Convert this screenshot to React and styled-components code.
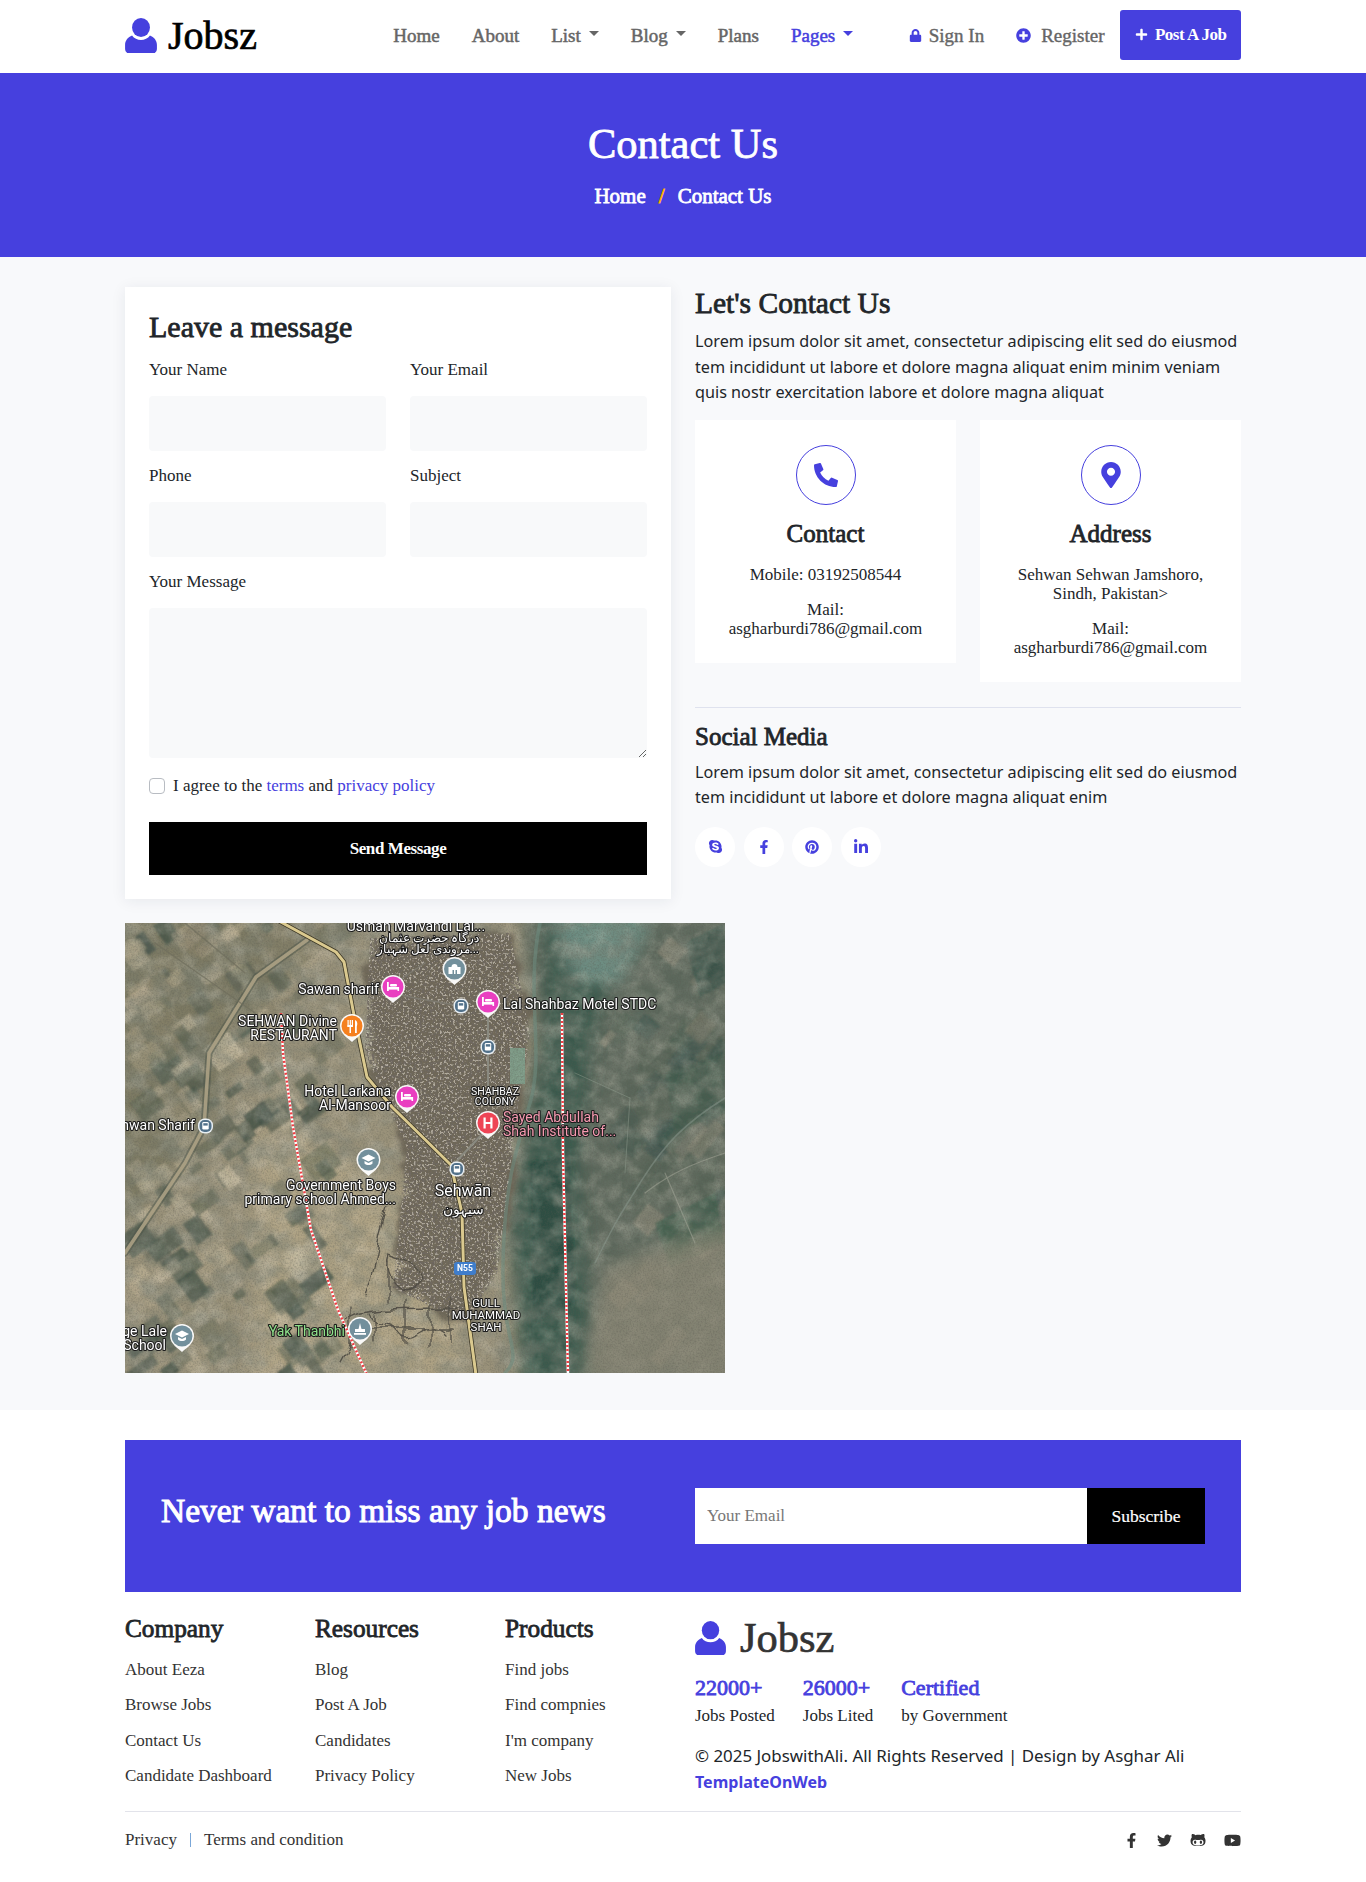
import React from "react";
import styled, { css, createGlobalStyle } from "styled-components";
import {
  FaFacebookF,
  FaGithubAlt,
  FaLinkedinIn,
  FaLock,
  FaMapMarkerAlt,
  FaPhoneAlt,
  FaPinterest,
  FaPlus,
  FaPlusCircle,
  FaSkype,
  FaTwitter,
  FaYoutube,
} from "react-icons/fa";

const navLinks = [
  { label: "Home" },
  { label: "About" },
  { label: "List", caret: true },
  { label: "Blog", caret: true },
  { label: "Plans" },
  { label: "Pages", caret: true, active: true },
];

const footerColumns = [
  { title: "Company", links: ["About Eeza", "Browse Jobs", "Contact Us", "Candidate Dashboard"] },
  { title: "Resources", links: ["Blog", "Post A Job", "Candidates", "Privacy Policy"] },
  { title: "Products", links: ["Find jobs", "Find compnies", "I'm company", "New Jobs"] },
];

const stats = [
  { value: "22000+", label: "Jobs Posted" },
  { value: "26000+", label: "Jobs Lited" },
  { value: "Certified", label: "by Government" },
];

// cheap seeded random so the map fields stay the same between runs
function seeded(seed) {
  let s = seed;
  return () => {
    s = (s * 16807) % 2147483647;
    return (s - 1) / 2147483646;
  };
}

function buildFields() {
  const rnd = seeded(4211);
  const list = [];
  const tones = ["#3a4a40", "#46564a", "#a89e84", "#b9ad92", "#8a846c", "#c6ba9e", "#3f4f44", "#b0a68c", "#58604e"];
  for (let i = 0; i < 170; i++) {
    const x = rnd() * 200 - 10;
    const y = rnd() * 460;
    list.push({
      x,
      y,
      w: 10 + rnd() * 26,
      h: 8 + rnd() * 22,
      fill: tones[Math.floor(rnd() * tones.length)],
      o: 0.35 + rnd() * 0.5,
      a: -36,
    });
  }
  // a few strips on the far bank
  const far = ["#41584a", "#7f7c6a", "#54685a", "#9a9380", "#35504a"];
  for (let i = 0; i < 50; i++) {
    const x = 470 + rnd() * 140;
    const y = rnd() * 460;
    list.push({
      x,
      y,
      w: 14 + rnd() * 30,
      h: 6 + rnd() * 16,
      fill: far[Math.floor(rnd() * far.length)],
      o: 0.25 + rnd() * 0.35,
      a: -50,
    });
  }
  return list;
}

const fields = buildFields();

function UserMark({ size }) {
  return (
    <svg width={size} height={size * 1.12} viewBox="0 0 32 36" aria-hidden="true">
      <ellipse cx="16" cy="9.5" rx="9" ry="9.5" fill="#4640de" />
      <path
        d="M7 17.5c2 3 5.5 4.5 9 4.5s7-1.5 9-4.5c4 1.5 7 5 7 9.5v4c0 2.8-2 5-5 5H5c-3 0-5-2.2-5-5v-4c0-4.500 3-8 7-9.500z"
        fill="#4640de"
      />
    </svg>
  );
}

function Pin({ x, y, color, children }) {
  return (
    <g transform={`translate(${x} ${y})`}>
      <path d="M0 15C-3 12-12 7-12 -1a12 12 0 0 1 24 0C12 7 3 12 0 15z" fill="#fff" opacity="0.95" />
      <circle r="10.500" cy="-1" fill={color} />
      <g fill="#fff" stroke="none">
        {children}
      </g>
    </g>
  );
}

function BusStop({ x, y }) {
  return (
    <g transform={`translate(${x} ${y})`}>
      <rect x="-7.500" y="-7.500" width="15" height="15" rx="6.500" fill="#e8eef2" />
      <rect x="-6" y="-6" width="12" height="12" rx="5" fill="#52718a" />
      <rect x="-3.200" y="-4" width="6.400" height="7.500" rx="1.200" fill="#fff" />
      <rect x="-2.200" y="-2.800" width="4.400" height="2.400" fill="#52718a" />
    </g>
  );
}

function MapLabel({ x, y, anchor, fill, size, children }) {
  return (
    <text
      x={x}
      y={y}
      textAnchor={anchor || "start"}
      dominantBaseline="middle"
      fontFamily="Roboto, sans-serif"
      fontSize={size || 14}
      fill={fill || "#fff"}
      stroke="#1c1c1c"
      strokeWidth="2.200"
      strokeLinejoin="round"
      paintOrder="stroke"
    >
      {children}
    </text>
  );
}

const BedGlyph = () => (
  <>
    <rect x="-6" y="-6" width="1.800" height="9" />
    <rect x="-6" y="-1" width="12" height="2.600" />
    <rect x="4.500" y="-1" width="1.600" height="4" />
    <rect x="-3" y="-4" width="7" height="2.500" rx="1" />
  </>
);

const CapGlyph = () => (
  <>
    <path d="M-7 -3L0 -6.500L7 -3L0 0.500z" />
    <path d="M-4 0v2.500c2 2 6 2 8 0V0L0 2z" />
  </>
);

const townShape = "M245 15L385 10 405 110 392 190 385 250 372 350 340 400 268 365 282 225 240 130z";

function SatelliteMap() {
  return (
    <svg width="600" height="450" viewBox="0 0 600 450" role="img" aria-label="Map of Sehwan">
      <defs>
        <filter id="soft" x="-20%" y="-20%" width="140%" height="140%">
          <feGaussianBlur stdDeviation="8" />
        </filter>
        <filter id="crisp" x="-5%" y="-5%" width="110%" height="110%">
          <feGaussianBlur stdDeviation="0.800" />
        </filter>
        <filter id="mottle">
          <feTurbulence type="fractalNoise" baseFrequency="0.035 0.05" numOctaves="5" seed="21" />
          <feColorMatrix values="0 0 0 0 0.2  0 0 0 0 0.22  0 0 0 0 0.18  2.600 0 0 0 -0.950" />
        </filter>
        <filter id="mottleLight">
          <feTurbulence type="fractalNoise" baseFrequency="0.06" numOctaves="4" seed="5" />
          <feColorMatrix values="0 0 0 0 0.85  0 0 0 0 0.8  0 0 0 0 0.68  2.400 0 0 0 -1" />
        </filter>
        <filter id="grainFine">
          <feTurbulence type="fractalNoise" baseFrequency="0.6" numOctaves="2" seed="3" />
          <feColorMatrix values="0 0 0 0 0.1  0 0 0 0 0.1  0 0 0 0 0.08  2.400 0 0 0 -1" />
        </filter>
        <filter id="townEdge" x="-15%" y="-15%" width="130%" height="130%">
          <feTurbulence type="fractalNoise" baseFrequency="0.03" numOctaves="3" seed="9" result="n" />
          <feDisplacementMap in="SourceGraphic" in2="n" scale="34" xChannelSelector="R" yChannelSelector="G" />
          <feGaussianBlur stdDeviation="2" />
        </filter>
        <filter id="wobble" x="-10%" y="-10%" width="120%" height="120%">
          <feTurbulence type="fractalNoise" baseFrequency="0.05" numOctaves="2" seed="14" result="n" />
          <feDisplacementMap in="SourceGraphic" in2="n" scale="12" xChannelSelector="R" yChannelSelector="G" />
        </filter>
        <filter id="townDark" x="-5%" y="-5%" width="110%" height="110%">
          <feTurbulence type="fractalNoise" baseFrequency="0.38" numOctaves="3" seed="12" />
          <feColorMatrix values="0 0 0 0 0.16  0 0 0 0 0.14  0 0 0 0 0.12  8 0 0 0 -3.800" />
          <feComposite in2="SourceGraphic" operator="in" />
        </filter>
        <filter id="townLight" x="-5%" y="-5%" width="110%" height="110%">
          <feTurbulence type="fractalNoise" baseFrequency="0.46" numOctaves="2" seed="31" />
          <feColorMatrix values="0 0 0 0 0.74  0 0 0 0 0.69  0 0 0 0 0.6  8 0 0 0 -4.400" />
          <feComposite in2="SourceGraphic" operator="in" />
        </filter>
      </defs>
      <rect width="600" height="450" fill="#9a927a" />
      <g filter="url(#soft)">
        <path d="M0 300L90 190 110 120 190 20 150 -10H-10V300z" fill="#7d7a63" />
        <path d="M130 200L250 250 330 300 340 460H130z" fill="#aea284" />
        <path d="M395 -10H610V460H400L380 300 410 120z" fill="#5c685b" />
        <path d="M415 -10H500L470 120 455 240 470 460H395L385 300 420 100z" fill="#3b5a4e" />
        <path d="M425 -10H530L495 60 450 55z" fill="#6d8d82" />
        <path d="M510 120L610 60V270L500 300z" fill="#586558" />
      </g>
      <g filter="url(#crisp)">
        {fields.map((f, i) => (
          <rect
            key={i}
            x={f.x}
            y={f.y}
            width={f.w}
            height={f.h}
            fill={f.fill}
            opacity={f.o}
            transform={`rotate(${f.a} ${f.x} ${f.y})`}
          />
        ))}
        <path d="M540 150L600 130V190L550 210z" fill="#3e5a4c" opacity="0.7" />
        <path d="M530 300L590 270 600 320 545 345z" fill="#42604f" opacity="0.8" />
        <path d="M560 20L600 0V60L575 75z" fill="#2f4d42" opacity="0.7" />
        <path d="M405 240L445 230 450 380 408 400z" fill="#27493f" opacity="0.7" />
      </g>
      <rect width="600" height="450" filter="url(#mottle)" opacity="0.5" />
      <rect width="600" height="450" filter="url(#mottleLight)" opacity="0.22" />
      <path d="M480 345L610 300V460H455z" fill="#8f8a78" opacity="0.75" filter="url(#soft)" />
      <g filter="url(#townEdge)">
        <path d={townShape} fill="#6c6557" opacity="0.92" />
      </g>
      <path d={townShape} fill="#000" filter="url(#townDark)" opacity="0.85" />
      <path d={townShape} fill="#000" filter="url(#townLight)" opacity="0.6" />
      <rect x="385" y="125" width="15" height="36" fill="#7fa08c" opacity="0.9" />
      <rect width="600" height="450" filter="url(#grainFine)" opacity="0.3" />
      <g fill="none" strokeLinecap="round" strokeLinejoin="round">
        <path d="M0 330L60 240 79 204 84 130 131 54 182 17" stroke="#4b5348" strokeWidth="7" opacity="0.5" />
        <path d="M0 330L60 240 79 204 84 130 131 54 182 17" stroke="#b0a587" strokeWidth="3.500" opacity="0.85" />
        <path d="M30 20L130 90M60 0L120 50" stroke="#6f6d5c" strokeWidth="1.500" opacity="0.7" />
        <path d="M415 0C400 70 420 130 405 180S380 260 378 340 400 430 380 450" stroke="#6d8c80" strokeWidth="3.500" opacity="0.55" />
        <path d="M600 175C560 200 540 220 515 260S490 300 470 340" stroke="#8b9a8f" strokeWidth="1.500" opacity="0.5" />
        <path d="M600 230C570 240 545 250 520 270M540 250L570 320" stroke="#a7a99b" strokeWidth="1.200" opacity="0.5" />
        <path d="M450 150L505 175M505 175L500 250" stroke="#8d9a8c" strokeWidth="1" opacity="0.5" />
        <g stroke="#4d4a42" strokeWidth="1.300" opacity="0.9" filter="url(#wobble)">
          <path d="M262 285L255 310 248 345 240 375" />
          <path d="M263 330C285 335 295 345 295 355 290 372 275 372 266 355 262 345 260 338 263 330z" />
          <path d="M263 330V380" />
          <path d="M220 395C240 385 265 385 335 385" />
          <path d="M225 425V385M250 420V390M280 420V375M305 425V380M325 420V375" />
          <path d="M225 405H330M245 390C255 410 265 395 275 410S300 390 320 410" />
          <path d="M215 440L240 395" />
        </g>
        <path d="M363 90V170M363 205L325 245" stroke="#8a8a80" strokeWidth="2" />
        <path d="M225 60L290 75 330 82M300 40L270 60" stroke="#7d7a70" strokeWidth="1.500" />
        <path
          d="M154 -2L211 29 219 39 228 87 242 154 267 184 326 242 337 290 339 364 351 452"
          stroke="#3a3524"
          strokeWidth="4.500"
        />
        <path
          d="M154 -2L211 29 219 39 228 87 242 154 267 184 326 242 337 290 339 364 351 452"
          stroke="#dac98f"
          strokeWidth="3"
        />
        <path d="M156 90L158 130 168 204 186 307 213 387 242 452" stroke="#fff" strokeWidth="2.500" strokeLinecap="butt" />
        <path
          d="M156 90L158 130 168 204 186 307 213 387 242 452"
          stroke="#ef3f45"
          strokeWidth="2.500"
          strokeDasharray="2 2"
          strokeLinecap="butt"
        />
        <path d="M437 90L438 230 443 452" stroke="#fff" strokeWidth="2.500" strokeLinecap="butt" />
        <path
          d="M437 90L438 230 443 452"
          stroke="#ef3f45"
          strokeWidth="2.500"
          strokeDasharray="2 2"
          strokeLinecap="butt"
        />
      </g>

      <MapLabel x={291} y={4} anchor="middle">Usman Marvandi Lal...</MapLabel>
      <MapLabel x={354} y={16} anchor="end" size={12}>درگاہ حضرت عثمان</MapLabel>
      <MapLabel x={354} y={27} anchor="end" size={12}>مروندی لعل شہباز...</MapLabel>

      <Pin x={329.500} y={47} color="#73909c">
        <rect x="-6" y="-3" width="12" height="7" />
        <circle cy="-3" r="3" />
        <rect x="-2" y="0" width="1.500" height="4" fill="#73909c" />
        <rect x="1" y="0" width="1.500" height="4" fill="#73909c" />
      </Pin>
      <BusStop x={336} y={83} />
      <BusStop x={363} y={124} />
      <BusStop x={332} y={246} />
      <BusStop x={80.500} y={203} />

      <MapLabel x={254} y={67} anchor="end">Sawan sharif</MapLabel>
      <Pin x={268} y={65} color="#e93fc0"><BedGlyph /></Pin>
      <MapLabel x={378} y={82}>Lal Shahbaz Motel STDC</MapLabel>
      <Pin x={363} y={80} color="#e93fc0"><BedGlyph /></Pin>

      <MapLabel x={212} y={99} anchor="end">SEHWAN Divine</MapLabel>
      <MapLabel x={212} y={113} anchor="end">RESTAURANT</MapLabel>
      <Pin x={227} y={104} color="#f5801f">
        <rect x="-4.500" y="-7" width="1.200" height="7" />
        <rect x="-2.300" y="-7" width="1.200" height="7" />
        <rect x="-0.200" y="-7" width="1.200" height="7" />
        <rect x="-4.500" y="-2" width="5.500" height="2" />
        <rect x="-2.500" y="-1" width="1.500" height="7" />
        <path d="M3 -7c2.500 1 2.800 4 1.800 6.500V6H3z" />
      </Pin>

      <MapLabel x={266} y={169} anchor="end">Hotel Larkana</MapLabel>
      <MapLabel x={266} y={183} anchor="end">Al-Mansoor</MapLabel>
      <Pin x={282} y={175} color="#e93fc0"><BedGlyph /></Pin>

      <MapLabel x={370} y={169} anchor="middle" size={10.500}>SHAHBAZ</MapLabel>
      <MapLabel x={370} y={179} anchor="middle" size={10.500}>COLONY</MapLabel>

      <Pin x={363} y={201} color="#ee4455">
        <rect x="-4.500" y="-6.500" width="2.200" height="11" />
        <rect x="2.300" y="-6.500" width="2.200" height="11" />
        <rect x="-4" y="-2" width="8" height="2" />
      </Pin>
      <MapLabel x={378} y={195} fill="#f59ab0">Sayed Abdullah</MapLabel>
      <MapLabel x={378} y={209} fill="#f59ab0">Shah Institute of...</MapLabel>

      <MapLabel x={70} y={203} anchor="end">Sehwan Sharif</MapLabel>

      <Pin x={243.500} y={238} color="#73909c"><CapGlyph /></Pin>
      <MapLabel x={271} y={263} anchor="end">Government Boys</MapLabel>
      <MapLabel x={271} y={277} anchor="end">primary school Ahmed...</MapLabel>

      <MapLabel x={338} y={269} anchor="middle" size={16}>Sehwān</MapLabel>
      <MapLabel x={338} y={287} anchor="middle" size={14}>سیہون</MapLabel>

      <rect x="329" y="339" width="22" height="13" rx="3" fill="#3f7dcb" />
      <text
        x="340"
        y="346"
        textAnchor="middle"
        dominantBaseline="middle"
        fontFamily="Roboto, sans-serif"
        fontWeight="700"
        fontSize="8.500"
        fill="#fff"
      >
        N55
      </text>

      <MapLabel x={361} y={381} anchor="middle" size={11.500}>GULL</MapLabel>
      <MapLabel x={361} y={393} anchor="middle" size={11.500}>MUHAMMAD</MapLabel>
      <MapLabel x={361} y={405} anchor="middle" size={11.500}>SHAH</MapLabel>

      <MapLabel x={220} y={409} anchor="end" fill="#8fe08a">Yak Thanbhi</MapLabel>
      <Pin x={235} y={407} color="#73909c">
        <path d="M0 -7l1.500 6H5v3H-5v-3h3.500z" />
        <rect x="-6" y="3" width="12" height="1.800" />
      </Pin>

      <MapLabel x={42} y={409} anchor="end">Sage Lale</MapLabel>
      <MapLabel x={41} y={423} anchor="end">School</MapLabel>
      <Pin x={57} y={414} color="#73909c"><CapGlyph /></Pin>
    </svg>
  );
}

function App() {
  return (
    <>
      <GlobalStyle />
      <TopBar>
        <Wrap>
          <NavRow>
            <Logo>
              <UserMark size={32} />
              <LogoText>Jobsz</LogoText>
            </Logo>
            <NavList>
              {navLinks.map((link) => (
                <NavLink key={link.label} $active={link.active}>
                  {link.label}
                  {link.caret && <Caret />}
                </NavLink>
              ))}
            </NavList>
            <AuthLink $first>
              <FaLock size={13} color="#4640de" />
              Sign In
            </AuthLink>
            <AuthLink $wide>
              <FaPlusCircle size={15} color="#4640de" />
              Register
            </AuthLink>
            <PostButton>
              <FaPlus size={13} />
              Post A Job
            </PostButton>
          </NavRow>
        </Wrap>
      </TopBar>

      <Hero>
        <HeroTitle>Contact Us</HeroTitle>
        <Crumbs>
          <span>Home</span>
          <CrumbSep>/</CrumbSep>
          <span>Contact Us</span>
        </Crumbs>
      </Hero>

      <Main>
        <Wrap>
          <ContactGrid>
            <FormCard>
              <FormTitle>Leave a message</FormTitle>
              <FieldGrid>
                <div>
                  <FieldLabel>Your Name</FieldLabel>
                  <TextInput type="text" />
                </div>
                <div>
                  <FieldLabel>Your Email</FieldLabel>
                  <TextInput type="email" />
                </div>
                <div>
                  <FieldLabel>Phone</FieldLabel>
                  <TextInput type="text" />
                </div>
                <div>
                  <FieldLabel>Subject</FieldLabel>
                  <TextInput type="text" />
                </div>
              </FieldGrid>
              <FieldLabel>Your Message</FieldLabel>
              <MessageBox />
              <AgreeRow>
                <AgreeBox type="checkbox" />
                <span>
                  I agree to the <TextLink>terms</TextLink> and <TextLink>privacy policy</TextLink>
                </span>
              </AgreeRow>
              <SendButton type="button">Send Message</SendButton>
            </FormCard>

            <div>
              <SideTitle>Let's Contact Us</SideTitle>
              <Lead>
                Lorem ipsum dolor sit amet, consectetur adipiscing elit sed do eiusmod tem incididunt ut
                labore et dolore magna aliquat enim minim veniam quis nostr exercitation labore et dolore
                magna aliquat
              </Lead>
              <InfoGrid>
                <InfoCard>
                  <InfoIcon>
                    <FaPhoneAlt size={24} />
                  </InfoIcon>
                  <InfoTitle>Contact</InfoTitle>
                  <InfoText>Mobile: 03192508544</InfoText>
                  <InfoText>
                    Mail:
                    <br />
                    asgharburdi786@gmail.com
                  </InfoText>
                </InfoCard>
                <InfoCard>
                  <InfoIcon>
                    <FaMapMarkerAlt size={26} />
                  </InfoIcon>
                  <InfoTitle>Address</InfoTitle>
                  <InfoText>Sehwan Sehwan Jamshoro, Sindh, Pakistan&gt;</InfoText>
                  <InfoText>
                    Mail:
                    <br />
                    asgharburdi786@gmail.com
                  </InfoText>
                </InfoCard>
              </InfoGrid>
              <Divider />
              <SocialTitle>Social Media</SocialTitle>
              <Lead>
                Lorem ipsum dolor sit amet, consectetur adipiscing elit sed do eiusmod tem incididunt ut
                labore et dolore magna aliquat enim
              </Lead>
              <SocialRow>
                <SocialDot><FaSkype size={15} /></SocialDot>
                <SocialDot><FaFacebookF size={14} /></SocialDot>
                <SocialDot><FaPinterest size={14} /></SocialDot>
                <SocialDot><FaLinkedinIn size={16} /></SocialDot>
              </SocialRow>
            </div>
          </ContactGrid>
          <MapFrame>
            <SatelliteMap />
          </MapFrame>
        </Wrap>
      </Main>

      <Footer>
        <Wrap>
          <Newsletter>
            <NewsTitle>Never want to miss any job news</NewsTitle>
            <NewsForm>
              <NewsInput type="text" placeholder="Your Email" />
              <NewsButton type="button">Subscribe</NewsButton>
            </NewsForm>
          </Newsletter>

          <FooterGrid>
            <LinkColumns>
              {footerColumns.map((col) => (
                <div key={col.title}>
                  <ColumnTitle>{col.title}</ColumnTitle>
                  {col.links.map((link) => (
                    <ColumnLink key={link}>{link}</ColumnLink>
                  ))}
                </div>
              ))}
            </LinkColumns>
            <div>
              <FooterLogo>
                <UserMark size={31} />
                <FooterLogoText>Jobsz</FooterLogoText>
              </FooterLogo>
              <StatRow>
                {stats.map((s) => (
                  <div key={s.label}>
                    <StatValue>{s.value}</StatValue>
                    <StatLabel>{s.label}</StatLabel>
                  </div>
                ))}
              </StatRow>
              <Copyright>
                © 2025 JobswithAli. All Rights Reserved | Design by Asghar Ali
                <br />
                <strong>TemplateOnWeb</strong>
              </Copyright>
            </div>
          </FooterGrid>

          <BottomBar>
            <BottomLinks>
              <span>Privacy</span>
              <BottomSep />
              <span>Terms and condition</span>
            </BottomLinks>
            <BottomIcons>
              <FaFacebookF size={15} />
              <FaTwitter size={15} />
              <FaGithubAlt size={16} />
              <FaYoutube size={17} />
            </BottomIcons>
          </BottomBar>
        </Wrap>
      </Footer>
    </>
  );
}

export default App;

const serif = `"Liberation Serif", serif`;
const sans = `"Noto Sans", Lato, sans-serif`;
const blue = "#4640de";

// the headings read as a regular face thickened a little, not a true bold
const heavy = css`
  font-weight: 400;
  -webkit-text-stroke: 0.8px currentColor;
`;

const GlobalStyle = createGlobalStyle`
  * {
    box-sizing: border-box;
  }
  body {
    margin: 0;
    background: #fff;
    color: #212529;
    font-family: ${serif};
    font-size: 17px;
  }
  input, textarea, button {
    font-family: ${serif};
  }
`;

const Wrap = styled.div`
  width: 1116px;
  margin: 0 auto;
`;

const TopBar = styled.header`
  height: 73px;
  background: #fff;
`;

const NavRow = styled.nav`
  display: flex;
  align-items: center;
  height: 71px;
`;

const Logo = styled.div`
  display: flex;
  align-items: center;
  gap: 11px;
`;

const LogoText = styled.span`
  font-size: 40px;
  color: #000;
  -webkit-text-stroke: 0.7px #000;
`;

const NavList = styled.div`
  display: flex;
  gap: 32px;
  margin-left: auto;
`;

const NavLink = styled.a`
  display: flex;
  align-items: center;
  gap: 8px;
  font-size: 19px;
  color: ${(p) => (p.$active ? blue : "#666")};
  -webkit-text-stroke: 0.5px currentColor;
`;

const Caret = styled.i`
  width: 0;
  height: 0;
  margin-bottom: 4px;
  border-top: 5.5px solid currentColor;
  border-left: 5.5px solid transparent;
  border-right: 5.5px solid transparent;
`;

const AuthLink = styled.a`
  display: flex;
  align-items: center;
  gap: ${(p) => (p.$wide ? "10px" : "7px")};
  margin-left: ${(p) => (p.$first ? "55.5px" : "32px")};
  font-size: 19px;
  color: #666;
  -webkit-text-stroke: 0.4px currentColor;
`;

const PostButton = styled.a`
  display: flex;
  align-items: center;
  gap: 7px;
  height: 50px;
  margin-left: 16px;
  margin-top: -2px;
  padding: 0 14.5px;
  background: ${blue};
  border-radius: 3px;
  color: #fff;
  font-size: 17px;
  font-weight: 700;
  letter-spacing: -0.5px;
`;

const Hero = styled.section`
  height: 184px;
  padding-top: 44px;
  background: ${blue};
  color: #fff;
  text-align: center;
`;

const HeroTitle = styled.h1`
  ${heavy}
  margin: 0;
  font-size: 42.5px;
  line-height: 54px;
`;

const Crumbs = styled.div`
  ${heavy}
  display: flex;
  justify-content: center;
  gap: 13px;
  margin-top: 10px;
  font-size: 21px;
  line-height: 30px;
`;

const CrumbSep = styled.span`
  color: #ffb400;
`;

const Main = styled.main`
  padding: 30px 0 37px;
  background: #f8f9fb;
`;

const ContactGrid = styled.div`
  display: grid;
  grid-template-columns: 546px 546px;
  gap: 24px;
  align-items: start;
`;

const FormCard = styled.form`
  height: 612px;
  padding: 24px;
  background: #fff;
  box-shadow: 0 2px 14px rgba(30, 40, 70, 0.08);
`;

const FormTitle = styled.h2`
  ${heavy}
  margin: 0 0 15px;
  font-size: 30px;
  line-height: 32px;
  color: #212529;
`;

const FieldGrid = styled.div`
  display: grid;
  grid-template-columns: 237px 237px;
  column-gap: 24px;
`;

const FieldLabel = styled.label`
  display: block;
  margin-bottom: 14px;
  line-height: 24px;
  color: #212529;
`;

const TextInput = styled.input`
  display: block;
  width: 100%;
  height: 55px;
  margin-bottom: 13px;
  background: #f8f9fa;
  border: 0;
  border-radius: 4px;
`;

const MessageBox = styled.textarea`
  display: block;
  width: 100%;
  height: 150px;
  background: #f8f9fa;
  border: 0;
  border-radius: 4px;
  resize: vertical;
`;

const AgreeRow = styled.label`
  display: flex;
  align-items: center;
  gap: 8px;
  height: 24px;
  margin-top: 16px;
  color: #212529;
`;

const AgreeBox = styled.input`
  appearance: none;
  width: 16px;
  height: 16px;
  margin: 0;
  background: #fff;
  border: 1px solid #b8bcc2;
  border-radius: 4px;
`;

const TextLink = styled.a`
  color: ${blue};
`;

const SendButton = styled.button`
  display: block;
  width: 100%;
  height: 53px;
  margin-top: 24px;
  background: #000;
  border: 0;
  color: #fff;
  font-size: 17px;
  font-weight: 700;
  letter-spacing: -0.4px;
`;

const SideTitle = styled.h3`
  ${heavy}
  margin: 0 0 9px;
  font-size: 29.5px;
  line-height: 33px;
  color: #212529;
`;

const Lead = styled.p`
  margin: 0;
  font-family: ${sans};
  font-size: 16.2px;
  line-height: 25.6px;
  color: #212529;
`;

const InfoGrid = styled.div`
  display: grid;
  grid-template-columns: 261px 261px;
  gap: 24px;
  align-items: start;
  margin-top: 14px;
`;

const InfoCard = styled.div`
  padding: 25px 20px;
  background: #fff;
  text-align: center;
`;

const InfoIcon = styled.div`
  display: flex;
  align-items: center;
  justify-content: center;
  width: 60px;
  height: 60px;
  margin: 0 auto 14px;
  border: 1px solid ${blue};
  border-radius: 50%;
  color: ${blue};
`;

const InfoTitle = styled.h4`
  ${heavy}
  margin: 0 0 17px;
  font-size: 25px;
  line-height: 29px;
  color: #212529;
`;

const InfoText = styled.p`
  margin: 0 0 16px;
  line-height: 19px;
  color: #212529;

  &:last-child {
    margin-bottom: 0;
  }
`;

const Divider = styled.hr`
  margin: 25px 0 14px;
  border: 0;
  border-top: 1px solid #dfe2ee;
`;

const SocialTitle = styled.h4`
  ${heavy}
  margin: 0 0 9px;
  font-size: 25px;
  line-height: 29px;
  color: #212529;
`;

const SocialRow = styled.div`
  display: flex;
  gap: 8.500px;
  margin-top: 16px;
`;

const SocialDot = styled.a`
  display: flex;
  align-items: center;
  justify-content: center;
  width: 40px;
  height: 40px;
  background: #fff;
  border-radius: 50%;
  color: ${blue};
`;

const MapFrame = styled.div`
  display: block;
  width: 600px;
  height: 450px;
  margin-top: 24px;
  overflow: hidden;

  svg {
    display: block;
  }
`;

const Footer = styled.footer`
  height: 472px;
  padding-top: 30px;
  background: #fff;
`;

const Newsletter = styled.section`
  display: flex;
  align-items: center;
  justify-content: space-between;
  height: 152px;
  padding: 0 36px;
  background: ${blue};
`;

const NewsTitle = styled.h2`
  ${heavy}
  margin: 0 0 10px;
  color: #fff;
  font-size: 33.500px;
  -webkit-text-stroke-width: 1px;
`;

const NewsForm = styled.div`
  display: flex;
  width: 510px;
  height: 56px;
`;

const NewsInput = styled.input`
  flex: 1;
  min-width: 0;
  padding: 0 12px;
  background: #fff;
  border: 0;
  font-size: 17px;

  &::placeholder {
    color: #777;
  }
`;

const NewsButton = styled.button`
  width: 118px;
  background: #000;
  border: 0;
  color: #fff;
  font-size: 17.500px;
  -webkit-text-stroke: 0.2px #fff;
`;

const FooterGrid = styled.div`
  display: grid;
  grid-template-columns: 546px 546px;
  gap: 24px;
  height: 220px;
  padding-top: 21px;
  border-bottom: 1px solid #e2e3ea;
`;

const LinkColumns = styled.div`
  display: grid;
  grid-template-columns: 190px 190px 166px;
`;

const ColumnTitle = styled.h5`
  ${heavy}
  margin: 0 0 15px;
  font-size: 25.3px;
  line-height: 30px;
  color: #212529;
`;

const ColumnLink = styled.a`
  display: block;
  margin-bottom: 11.400px;
  line-height: 24px;
  color: #333;
`;

const FooterLogo = styled.div`
  display: flex;
  align-items: center;
  gap: 14px;
  margin-bottom: 11px;
`;

const FooterLogoText = styled.span`
  font-size: 42.500px;
  line-height: 50px;
  color: #333;
  -webkit-text-stroke: 0.6px #333;
`;

const StatRow = styled.div`
  display: flex;
  gap: 28px;
`;

const StatValue = styled.div`
  ${heavy}
  font-size: 22px;
  line-height: 28px;
  color: ${blue};
`;

const StatLabel = styled.div`
  line-height: 28px;
  color: #212529;
`;

const Copyright = styled.p`
  margin: 13px 0 0;
  font-family: ${sans};
  font-size: 16.9px;
  line-height: 26px;
  color: #212529;

  strong {
    font-size: 16px;
    color: ${blue};
    font-weight: 700;
  }
`;

const BottomBar = styled.div`
  display: flex;
  align-items: center;
  justify-content: space-between;
  height: 56px;
`;

const BottomLinks = styled.div`
  display: flex;
  align-items: center;
  gap: 13px;
  color: #333;
`;

const BottomSep = styled.i`
  width: 1px;
  height: 14px;
  background: #7aa7d8;
`;

const BottomIcons = styled.div`
  display: flex;
  align-items: center;
  gap: 18px;
  color: #333;
`;
